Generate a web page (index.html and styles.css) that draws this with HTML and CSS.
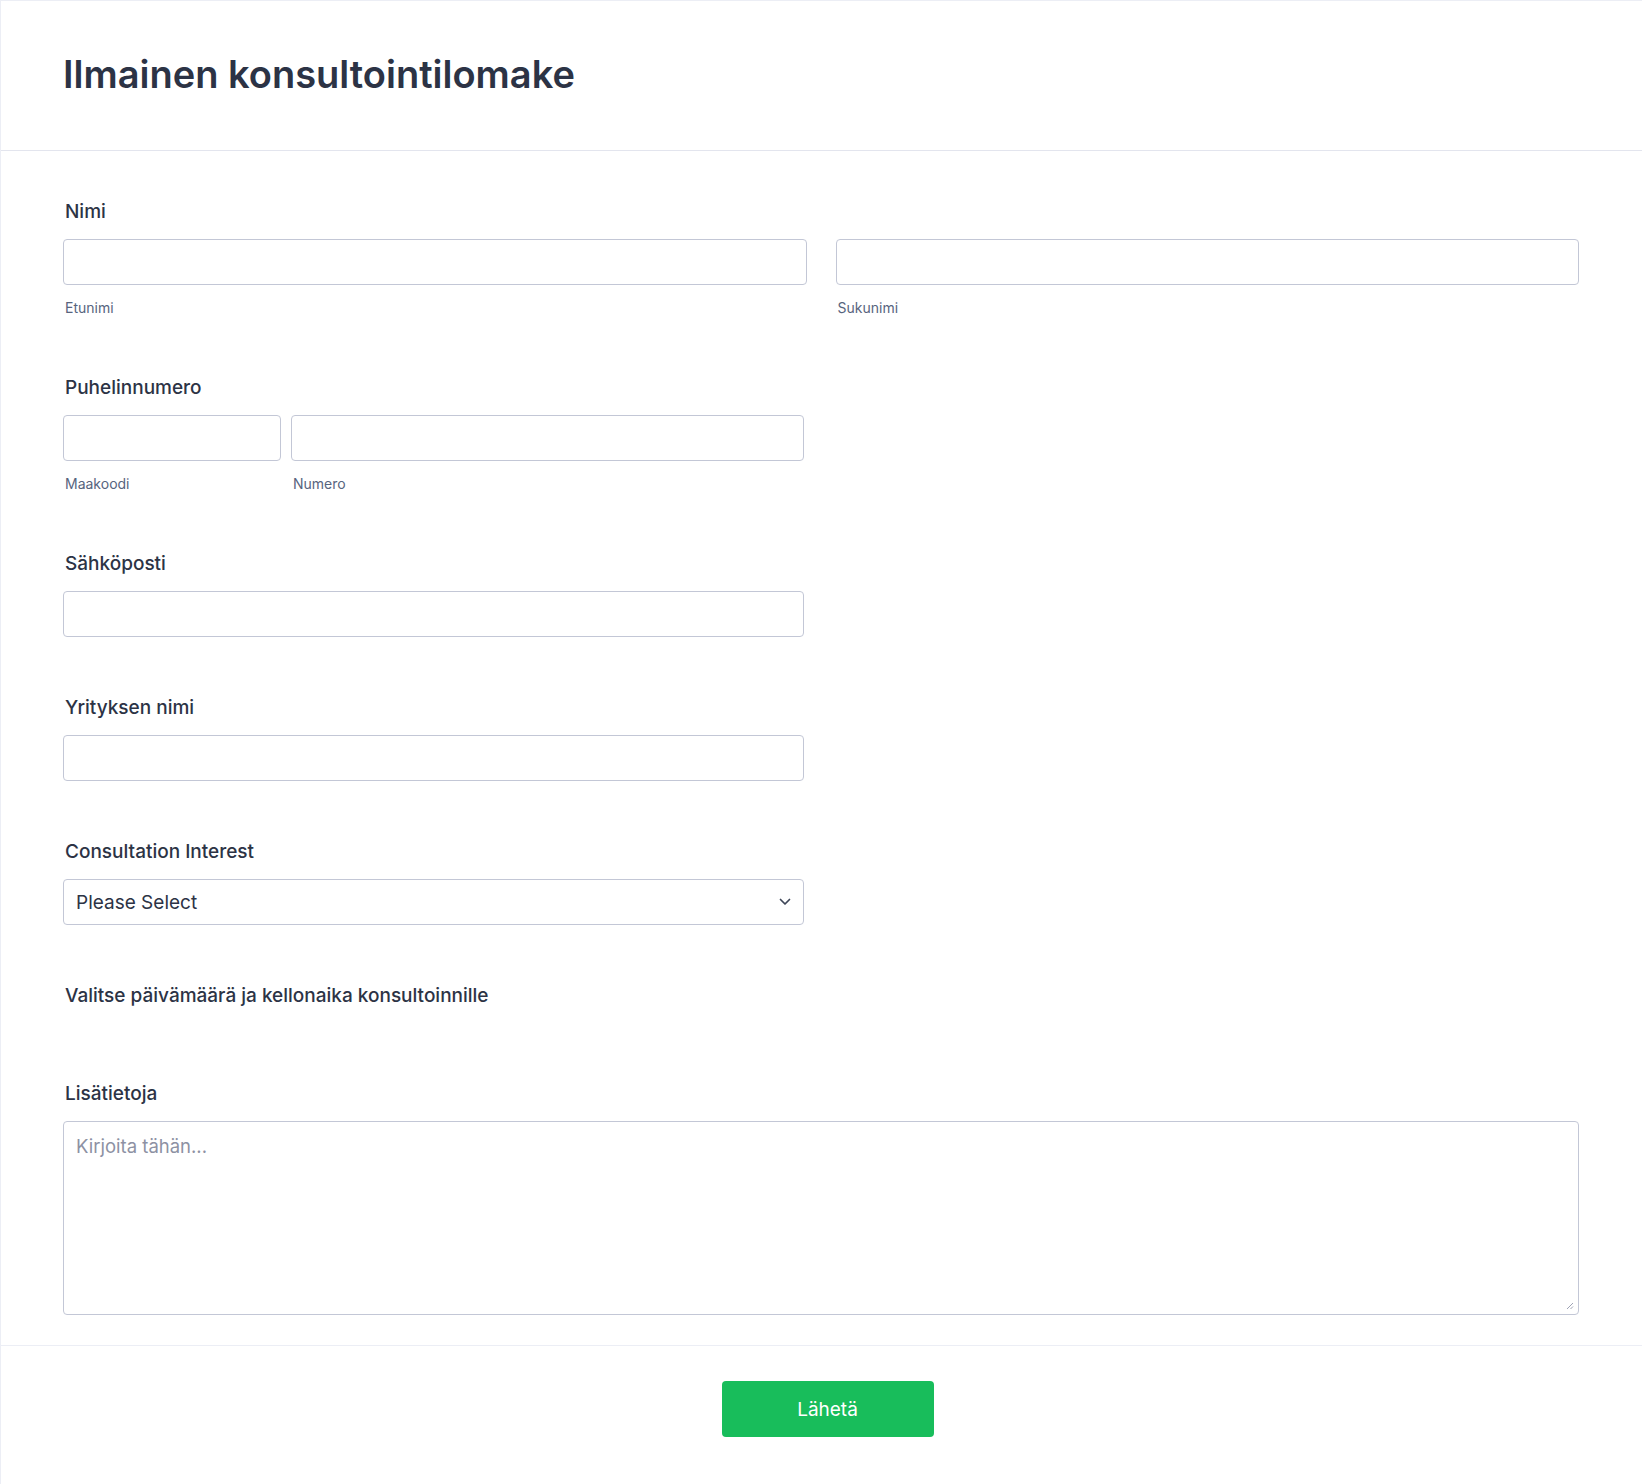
FILE: index.html
```html
<!DOCTYPE html>
<html lang="fi">
<head>
<meta charset="utf-8">
<title>Ilmainen konsultointilomake</title>
<link rel="stylesheet" href="styles.css">
</head>
<body>
<div class="form">
  <div class="form-header">
    <h1 class="form-title">Ilmainen konsultointilomake</h1>
  </div>
  <div class="form-body">
    <div class="field">
      <label class="label">Nimi</label>
      <div class="row-2">
        <div class="sub-field">
          <div class="input"></div>
          <span class="sublabel">Etunimi</span>
        </div>
        <div class="sub-field">
          <div class="input"></div>
          <span class="sublabel">Sukunimi</span>
        </div>
      </div>
    </div>
    <div class="field">
      <label class="label">Puhelinnumero</label>
      <div class="row-phone">
        <div class="sub-field area">
          <div class="input"></div>
          <span class="sublabel">Maakoodi</span>
        </div>
        <div class="sub-field number">
          <div class="input"></div>
          <span class="sublabel">Numero</span>
        </div>
      </div>
    </div>
    <div class="field">
      <label class="label">Sähköposti</label>
      <div class="input half"></div>
    </div>
    <div class="field">
      <label class="label">Yrityksen nimi</label>
      <div class="input half"></div>
    </div>
    <div class="field">
      <label class="label">Consultation Interest</label>
      <div class="input half select">
        <span class="select-text">Please Select</span>
        <svg class="chevron" width="12" height="8" viewBox="0 0 12 8"><path d="M1.5 1.5 L6 6 L10.5 1.5" fill="none" stroke="#3d4558" stroke-width="1.7" stroke-linecap="round" stroke-linejoin="round"/></svg>
      </div>
    </div>
    <div class="field">
      <label class="label">Valitse päivämäärä ja kellonaika konsultoinnille</label>
      <div class="empty-widget"></div>
    </div>
    <div class="field last">
      <label class="label">Lisätietoja</label>
      <div class="input textarea">
        <span class="placeholder">Kirjoita tähän...</span>
        <svg class="resize" width="8" height="8" viewBox="0 0 8 8"><path d="M7 1 L1 7 M7 4.5 L4.5 7" stroke="#9ea3b5" stroke-width="1" fill="none"/></svg>
      </div>
    </div>
  </div>
  <div class="form-footer">
    <button class="submit">Lähetä</button>
  </div>
</div>
</body>
</html>
```

FILE: styles.css
```css
* { box-sizing: border-box; }
html, body { margin: 0; padding: 0; background: #ffffff; }
body {
  font-family: Inter, "Noto Sans", "Liberation Sans", sans-serif;
  color: #2c3345;
}
.form {
  border-top: 1px solid #eceef5;
  border-left: 1px solid #eceef5;
  min-height: 1484px;
}
.form-header {
  height: 150px;
  padding: 0 62px 4px;
  display: flex;
  align-items: center;
  border-bottom: 1px solid #e3e5ee;
}
.form-title {
  margin: 0;
  font-size: 38px;
  font-weight: 600;
  letter-spacing: 0;
  color: #2c3345;
}
.form-body {
  padding: 49px 63px 30px 62px;
}
.field { margin-bottom: 59px; }
.field.last { margin-bottom: 0; }
.label {
  display: block;
  padding-left: 2px;
  font-size: 19px;
  font-weight: 500;
  line-height: 24px;
  margin-bottom: 15px;
  color: #2c3345;
}
.input {
  height: 46px;
  border: 1px solid #c3c7d6;
  border-radius: 4px;
  background: #fff;
}
.half { width: 741px; }
.row-2 {
  display: grid;
  grid-template-columns: 1fr 1fr;
  column-gap: 29px;
}
.row-phone {
  display: grid;
  grid-template-columns: 218px 513px;
  column-gap: 10px;
}
.sub-field { display: flex; flex-direction: column; }
.sublabel {
  margin-top: 14px;
  padding-left: 2px;
  font-size: 14px;
  line-height: 18px;
  color: #57647e;
}
.select {
  display: flex;
  align-items: center;
  justify-content: space-between;
  padding: 0 12px 0 12px;
}
.select-text { font-size: 19px; color: #2c3345; }
.chevron { display: block; }
.empty-widget { height: 17px; margin-top: -17px; }
.textarea {
  height: 194px;
  position: relative;
  padding: 12px 12px;
}
.placeholder {
  font-size: 18.5px;
  line-height: 24px;
  color: #8d91a3;
}
.resize { position: absolute; right: 4px; bottom: 4px; }
.form-footer {
  border-top: 1px solid #eceef5;
  padding: 35px 0 48px;
  display: flex;
  justify-content: center;
}
.submit {
  margin-left: 12px;
  width: 212px;
  height: 56px;
  border: none;
  border-radius: 4px;
  background: #18bd5b;
  color: #fff;
  font-family: Inter, "Noto Sans", "Liberation Sans", sans-serif;
  font-size: 19px;
  font-weight: 400;
}
```
